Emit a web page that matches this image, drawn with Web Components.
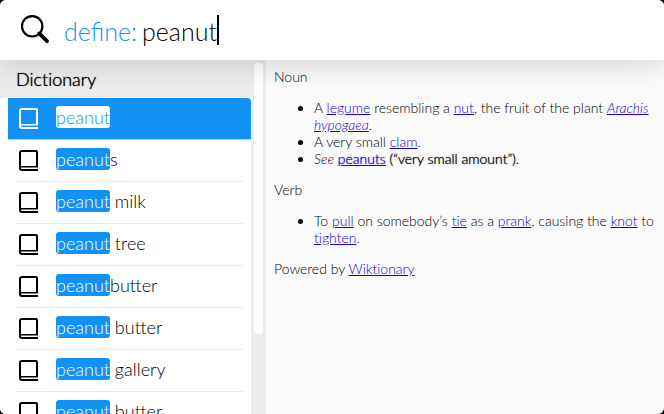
<!DOCTYPE html>
<html lang="en">
<head>
<meta charset="utf-8">
<title>Dictionary launcher</title>
<style>
html, body { height: 100%; margin: 0; background: #000; }
body { font-family: Lato, "Liberation Sans", sans-serif; font-weight: 300; color: #000; }
</style>
</head>
<body>
<launcher-window>
  <query-bar slot="query" prefix="define:" value="peanut"></query-bar>
  <result-list slot="results" heading="Dictionary">
    <result-item match="peanut" selected></result-item>
    <result-item match="peanut">s</result-item>
    <result-item match="peanut"> milk</result-item>
    <result-item match="peanut"> tree</result-item>
    <result-item match="peanut">butter</result-item>
    <result-item match="peanut"> butter</result-item>
    <result-item match="peanut"> gallery</result-item>
    <result-item match="peanut"> butter</result-item>
  </result-list>
  <definition-view slot="detail"></definition-view>
</launcher-window>
<script>
class Base extends HTMLElement {
  connectedCallback() {
    if (this.shadowRoot) return;
    this.attachShadow({ mode: 'open' }).innerHTML = this.render();
  }
}

customElements.define('launcher-window', class extends Base {
  render() {
    return `<style>
      :host { display: grid; grid-template: 60px minmax(0, 1fr) / 266px minmax(0, 1fr); height: 100vh; overflow: hidden; border-radius: 6px; background: #fafafa; }
      header { grid-column: 1 / -1; z-index: 1; background: #fff; box-shadow: 0 0 32px rgba(0, 0, 0, .2); }
      nav, main { min-height: 0; overflow: hidden; }
    </style>
    <header><slot name="query"></slot></header>
    <nav><slot name="results"></slot></nav>
    <main><slot name="detail"></slot></main>`;
  }
});

customElements.define('query-bar', class extends Base {
  render() {
    return `<style>
      :host { display: flex; align-items: center; height: 60px; padding-left: 20px; font-size: 25px; line-height: 30px; }
      svg { width: 30px; height: 30px; margin-right: 14px; }
      label { color: #1292f4; margin-right: 5px; padding-top: 2px; }
      input { field-sizing: content; font: inherit; line-height: 30px; color: #000; border: 0; padding: 2px 0 0; margin: 0; background: none; outline: none; }
      i { width: 2px; height: 30px; background: #000; }
    </style>
    <svg viewBox="0 0 30 30" fill="none" stroke="#000" aria-hidden="true"><circle cx="12.2" cy="11.3" r="10.2" stroke-width="2.2"/><path d="M19.3 18.5L27 26.2" stroke-width="3.8" stroke-linecap="round"/></svg>
    <label for="q">${this.getAttribute('prefix')}</label><input id="q" type="text" value="${this.getAttribute('value')}"><i></i>`;
  }
});

customElements.define('result-list', class extends Base {
  render() {
    return `<style>
      :host { display: grid; grid-template-columns: minmax(0, 1fr) 15px; height: 100%; background: #ececec; }
      section { min-height: 0; overflow: hidden; }
      h2 { margin: 0; padding: 8px 16px; font-size: 18px; line-height: 22px; font-weight: 300; font-variant-ligatures: none; text-shadow: 0 0 1px #000; }
      .items { background: #fff; border-radius: 4px; }
      .bar { padding: 3px; }
      .thumb { height: 271px; border-radius: 4px; background: #fff; }
    </style>
    <section><h2>${this.getAttribute('heading')}</h2><div class="items" role="listbox"><slot></slot></div></section>
    <div class="bar"><div class="thumb"></div></div>`;
  }
});

customElements.define('result-item', class extends Base {
  render() {
    return `<style>
      :host { display: block; padding: 0 8px 0 16px; }
      button { display: flex; align-items: center; width: 100%; height: 42px; margin: 0; padding: 0 0 3px 3px; border: 0; border-bottom: 1px solid #ececec; background: none; font: inherit; font-size: 18px; line-height: 22px; color: #000; text-align: left; white-space: pre; }
      svg { width: 20px; height: 21px; margin: 3px 17px 0 0; }
      mark { display: inline-block; height: 22px; background: #1292f4; color: #fff; border-radius: 3px; }
      :host([selected]) { padding: 0 0 0 8px; }
      :host([selected]) button { padding-left: 11px; color: #fff; background: #1292f4; border-bottom-color: #a4d4fa; border-radius: 0 4px 0 0; }
      :host([selected]) mark { background: #fff; color: #1292f4; }
    </style>
    <button type="button" role="option" aria-selected="${this.hasAttribute('selected')}"><svg viewBox="0 0 20 21" fill="none" stroke="currentColor" stroke-width="2" aria-hidden="true"><path d="M18 17V2Q18 1 17 1H3Q1 1 1 3V18Q1 20 3 20H19"/><path d="M1 16.8H19" stroke-width="1.6"/></svg><span><mark>${this.getAttribute('match')}</mark><slot></slot></span></button>`;
  }
});

customElements.define('definition-view', class extends Base {
  render() {
    return `<style>
      :host { display: block; padding: 8px; font-size: 14px; line-height: 17px; font-variant-ligatures: none; }
      p { margin: 0; }
      ul { margin: 14px 0; padding-left: 40px; }
      a { color: #2200cc; }
      b { font-weight: 300; text-shadow: 0 0 1px currentColor; }
      b a { text-shadow: 0 0 1px currentColor; }
    </style>
    <p>Noun</p>
    <ul>
      <li>A <a href="#legume">legume</a> resembling a <a href="#nut">nut</a>, the fruit of the plant <i><a href="#arachis">Arachis hypogaea</a></i>.</li>
      <li>A very small <a href="#clam">clam</a>.</li>
      <li><i>See</i> <b><a href="#peanuts">peanuts</a> (“very small amount”).</b></li>
    </ul>
    <p>Verb</p>
    <ul>
      <li>To <a href="#pull">pull</a> on somebody’s <a href="#tie">tie</a> as a <a href="#prank">prank</a>, causing the <a href="#knot">knot</a> to <a href="#tighten">tighten</a>.</li>
    </ul>
    <p>Powered by <a href="#wiktionary">Wiktionary</a></p>`;
  }
});
</script>
</body>
</html>
